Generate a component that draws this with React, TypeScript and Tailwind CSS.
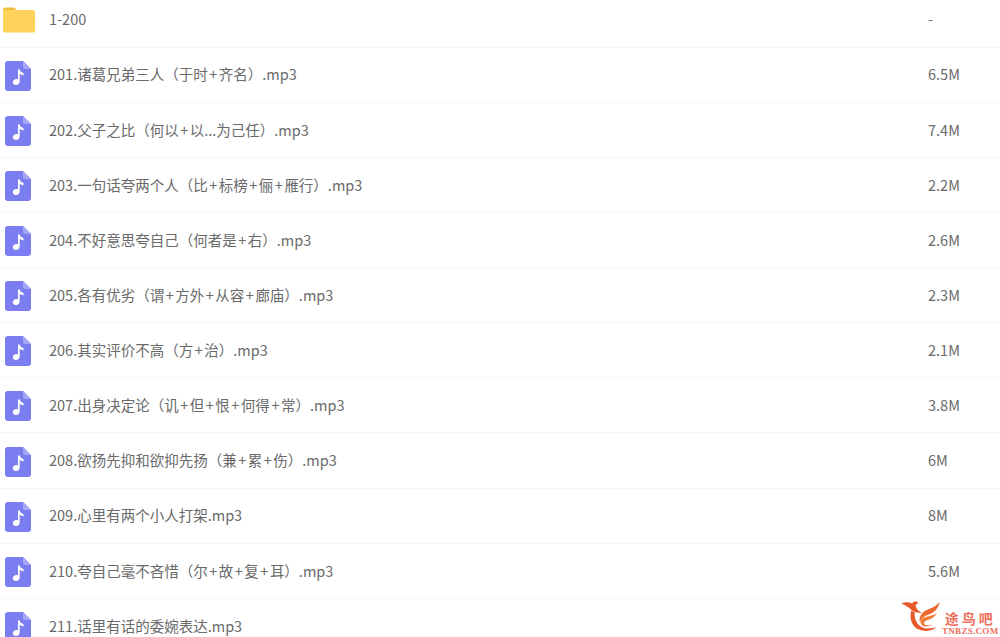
const rows = [
  ["201.诸葛兄弟三人（于时+齐名）.mp3", "6.5M"],
  ["202.父子之比（何以+以...为己任）.mp3", "7.4M"],
  ["203.一句话夸两个人（比+标榜+俪+雁行）.mp3", "2.2M"],
  ["204.不好意思夸自己（何者是+右）.mp3", "2.6M"],
  ["205.各有优劣（谓+方外+从容+廊庙）.mp3", "2.3M"],
  ["206.其实评价不高（方+治）.mp3", "2.1M"],
  ["207.出身决定论（讥+但+恨+何得+常）.mp3", "3.8M"],
  ["208.欲扬先抑和欲抑先扬（兼+累+伤）.mp3", "6M"],
  ["209.心里有两个小人打架.mp3", "8M"],
  ["210.夸自己毫不吝惜（尔+故+复+耳）.mp3", "5.6M"],
  ["211.话里有话的委婉表达.mp3", ""],
];

function Folder() {
  return (
    <svg width="32" height="26" viewBox="0 0 32 26" className="block">
      <path d="M0 2.500A2 2 0 0 1 2 .5h8.500a2 2 0 0 1 1.600.8L14 4H0z" fill="#f5bd3e" />
      <path d="M0 5a2 2 0 0 1 2-2h28a2 2 0 0 1 2 2v19a1.500 1.500 0 0 1-1.500 1.500h-29A1.500 1.500 0 0 1 0 24z" fill="#ffd359" />
    </svg>
  );
}

function Audio() {
  return (
    <svg width="26" height="30" viewBox="0 0 26 30" className="block">
      <path d="M3 0h15l8 8v19a3 3 0 0 1-3 3H3a3 3 0 0 1-3-3V3a3 3 0 0 1 3-3z" fill="#7b7df0" />
      <path d="M18 0l8 8h-6a2 2 0 0 1-2-2z" fill="#a5a6f6" />
      <path d="M13 8.500h1.800c.3 2 1.500 3 3.700 3.600v2.400c-1.700-.3-3-1-3.800-1.900v7.600c0 2.300-1.700 3.800-3.700 3.800-1.900 0-3.200-1.200-3.200-2.800 0-1.900 1.700-3.200 3.500-3.200.6 0 1.200.1 1.700.4z" fill="#fff" />
    </svg>
  );
}

function Logo() {
  return (
    <svg width="42" height="32" viewBox="0 0 46 36" className="block">
      <path d="M1 4c4-2 8-2 12 0 2-3 6-3 7 0-2 0-3 1-3 3 1 4 4 6 7 7-5 1-9 0-12-3C9 8 5 6 1 4z" fill="#e8562a" />
      <path d="M12 12c-2 8 0 17 8 21 8 3 15 2 20-2-5 1-12 2-17-1-5-3-8-10-7-16z" fill="#e8562a" />
      <path d="M44 2c-1 8-7 13-14 15-5 2-8 5-8 9-2-6 1-12 8-15 6-2 11-5 14-9z" fill="#ea6a2e" />
      <path d="M41 15c-3 5-8 7-12 8-3 1-3 4-1 5 3 1 6 0 8-1-3 3-9 4-12 1-3-3-1-8 4-9 5-1 10-2 13-4z" fill="#ee7a35" />
    </svg>
  );
}

function Name({ text }: { text: string }) {
  const parts = text.split("+");
  return (
    <div className="flex-1 whitespace-nowrap leading-none">
      {parts.map((p, i) => (
        <span key={i}>
          {i > 0 && <span className="mx-[1.5px]">+</span>}
          {p}
        </span>
      ))}
    </div>
  );
}

export default function App() {
  return (
    <div className="relative h-[637px] w-[1000px] overflow-hidden bg-white font-['Noto_Sans_CJK_SC','Microsoft_YaHei',sans-serif] text-[14.5px] text-[#6a6a6a]">
      <div className="mt-[-7.525px] flex flex-col">
        <div className="flex h-[55.125px] items-center border-b border-[#f6f6f6]">
          <div className="ml-[3px] mr-[14px] w-[32px]">
            <Folder />
          </div>
          <div className="flex-1 leading-none">1-200</div>
          <div className="w-[72px] leading-none">-</div>
        </div>
        {rows.map(([name, size]) => (
          <div key={name} className="flex h-[55.125px] items-center border-b border-[#f6f6f6]">
            <div className="ml-[5px] mr-[18px] mt-[2px] w-[26px]">
              <Audio />
            </div>
            <Name text={name} />
            <div className="w-[72px] leading-none">{size}</div>
          </div>
        ))}
      </div>
      <div className="absolute left-[900px] top-[600px] flex w-[100px] items-start">
        <Logo />
        <div className="mt-[11px] flex flex-col items-center whitespace-nowrap">
          <div className="text-[14px] font-bold leading-none tracking-[3px] text-[#ee7060]">途鸟吧</div>
          <div className="mt-[2px] font-['Liberation_Serif',serif] text-[9px] font-bold leading-none tracking-[0.3px] text-[#ee7060]">TNBZS.COM</div>
        </div>
      </div>
    </div>
  );
}
